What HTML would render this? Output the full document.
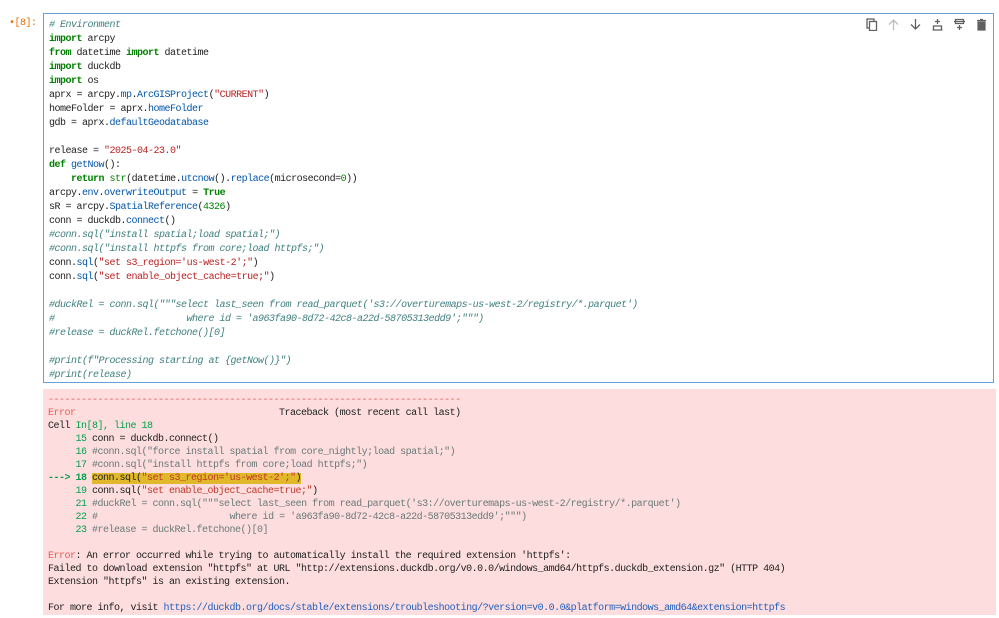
<!DOCTYPE html>
<html><head><style>
body{margin:0;background:#fff;width:999px;height:618px;overflow:hidden;position:relative;font-family:"Liberation Mono",monospace;font-size:10px;letter-spacing:-0.5px;color:#212121}
.prompt{position:absolute;left:9px;top:18px;color:#e66c00;}
.in{position:absolute;left:43px;top:13px;width:951px;height:370px;border:1px solid #64a0d8;box-sizing:border-box;background:#fff}
pre{margin:0;font:inherit;white-space:pre}
.code{position:absolute;left:5px;top:5px;line-height:14px}
.out{position:absolute;left:43px;top:389px;width:953px;height:226px;background:#fddddd}
.err{position:absolute;left:5px;top:5px;line-height:13px}
.k{color:#008000;font-weight:bold}.s{color:#ba2121}.c{color:#408080;font-style:italic}.a{color:#0055aa}.n{color:#008000}
.r{color:#e75c58}.g{color:#00a250}.gb{color:#00a250;font-weight:bold}.gr{color:#6a7a7a}.l{color:#2060c0}.sr{color:#c0382b}
.hl{background:#e0b82a}
.icons{position:absolute;right:5px;top:4px;display:flex;gap:9px}
.icons svg{width:13px;height:13px}
</style></head><body>
<div class="prompt">•[8]:</div>
<div class="in">
<pre class="code"><span class="c"># Environment</span>
<span class="k">import</span> arcpy
<span class="k">from</span> datetime <span class="k">import</span> datetime
<span class="k">import</span> duckdb
<span class="k">import</span> os
aprx = arcpy.<span class="a">mp</span>.<span class="a">ArcGISProject</span>(<span class="s">"CURRENT"</span>)
homeFolder = aprx.<span class="a">homeFolder</span>
gdb = aprx.<span class="a">defaultGeodatabase</span>

release = <span class="s">"2025-04-23.0"</span>
<span class="k">def</span> <span class="a">getNow</span>():
    <span class="k">return</span> <span class="n">str</span>(datetime.<span class="a">utcnow</span>().<span class="a">replace</span>(microsecond=<span class="n">0</span>))
arcpy.<span class="a">env</span>.<span class="a">overwriteOutput</span> = <span class="k">True</span>
sR = arcpy.<span class="a">SpatialReference</span>(<span class="n">4326</span>)
conn = duckdb.<span class="a">connect</span>()
<span class="c">#conn.sql("install spatial;load spatial;")</span>
<span class="c">#conn.sql("install httpfs from core;load httpfs;")</span>
conn.<span class="a">sql</span>(<span class="s">"set s3_region='us-west-2';"</span>)
conn.<span class="a">sql</span>(<span class="s">"set enable_object_cache=true;"</span>)

<span class="c">#duckRel = conn.sql("""select last_seen from read_parquet('s3://overturemaps-us-west-2/registry/*.parquet')</span>
<span class="c">#                        where id = 'a963fa90-8d72-42c8-a22d-58705313edd9';""")</span>
<span class="c">#release = duckRel.fetchone()[0]</span>

<span class="c">#print(f"Processing starting at {getNow()}")</span>
<span class="c">#print(release)</span></pre>
<div class="icons">
<svg viewBox="0 0 13 13"><rect x="2" y="1" width="7" height="9" fill="none" stroke="#616161" stroke-width="1.3"/><rect x="4.5" y="3.5" width="7" height="9" fill="#fff" stroke="#616161" stroke-width="1.3"/></svg>
<svg viewBox="0 0 13 13"><path d="M6.5 12V2M2 6.5l4.5-4.5 4.5 4.5" fill="none" stroke="#bdbdbd" stroke-width="1.3"/></svg>
<svg viewBox="0 0 13 13"><path d="M6.5 1v10M2 6.5l4.5 4.5 4.5-4.5" fill="none" stroke="#616161" stroke-width="1.3"/></svg>
<svg viewBox="0 0 13 13"><path d="M6.5 1v5M4 3.5h5M1.5 12h10M2.5 12V8h8v4" fill="none" stroke="#616161" stroke-width="1.3"/></svg>
<svg viewBox="0 0 13 13"><path d="M6.5 12V7M4 9.5h5M2.5 1.5h8v4h-8zM1 3.5h11" fill="none" stroke="#616161" stroke-width="1.3"/></svg>
<svg viewBox="0 0 13 13"><path d="M3 4h7v8H3zM2 2.5h9M5 1.5h3" fill="#616161" stroke="#616161" stroke-width="1.2"/></svg>
</div>
</div>
<div class="out">
<pre class="err"><span class="r">---------------------------------------------------------------------------</span>
<span class="r">Error</span>                                     Traceback (most recent call last)
Cell <span class="g">In[8], line 18</span>
<span class="g">     15</span> conn = duckdb.connect()
<span class="g">     16</span> <span class="gr">#conn.sql("force install spatial from core_nightly;load spatial;")</span>
<span class="g">     17</span> <span class="gr">#conn.sql("install httpfs from core;load httpfs;")</span>
<span class="gb">---&gt; 18</span> <span class="hl">conn.sql(<span class="sr">"set s3_region='us-west-2';"</span>)</span>
<span class="g">     19</span> conn.sql(<span class="sr">"set enable_object_cache=true;"</span>)
<span class="g">     21</span> <span class="gr">#duckRel = conn.sql("""select last_seen from read_parquet('s3://overturemaps-us-west-2/registry/*.parquet')</span>
<span class="g">     22</span> <span class="gr">#                        where id = 'a963fa90-8d72-42c8-a22d-58705313edd9';""")</span>
<span class="g">     23</span> <span class="gr">#release = duckRel.fetchone()[0]</span>

<span class="r">Error</span>: An error occurred while trying to automatically install the required extension 'httpfs':
Failed to download extension "httpfs" at URL "http://extensions.duckdb.org/v0.0.0/windows_amd64/httpfs.duckdb_extension.gz" (HTTP 404)
Extension "httpfs" is an existing extension.

For more info, visit <span class="l">https://duckdb.org/docs/stable/extensions/troubleshooting/?version=v0.0.0&amp;platform=windows_amd64&amp;extension=httpfs</span></pre>
</div>
</body></html>
